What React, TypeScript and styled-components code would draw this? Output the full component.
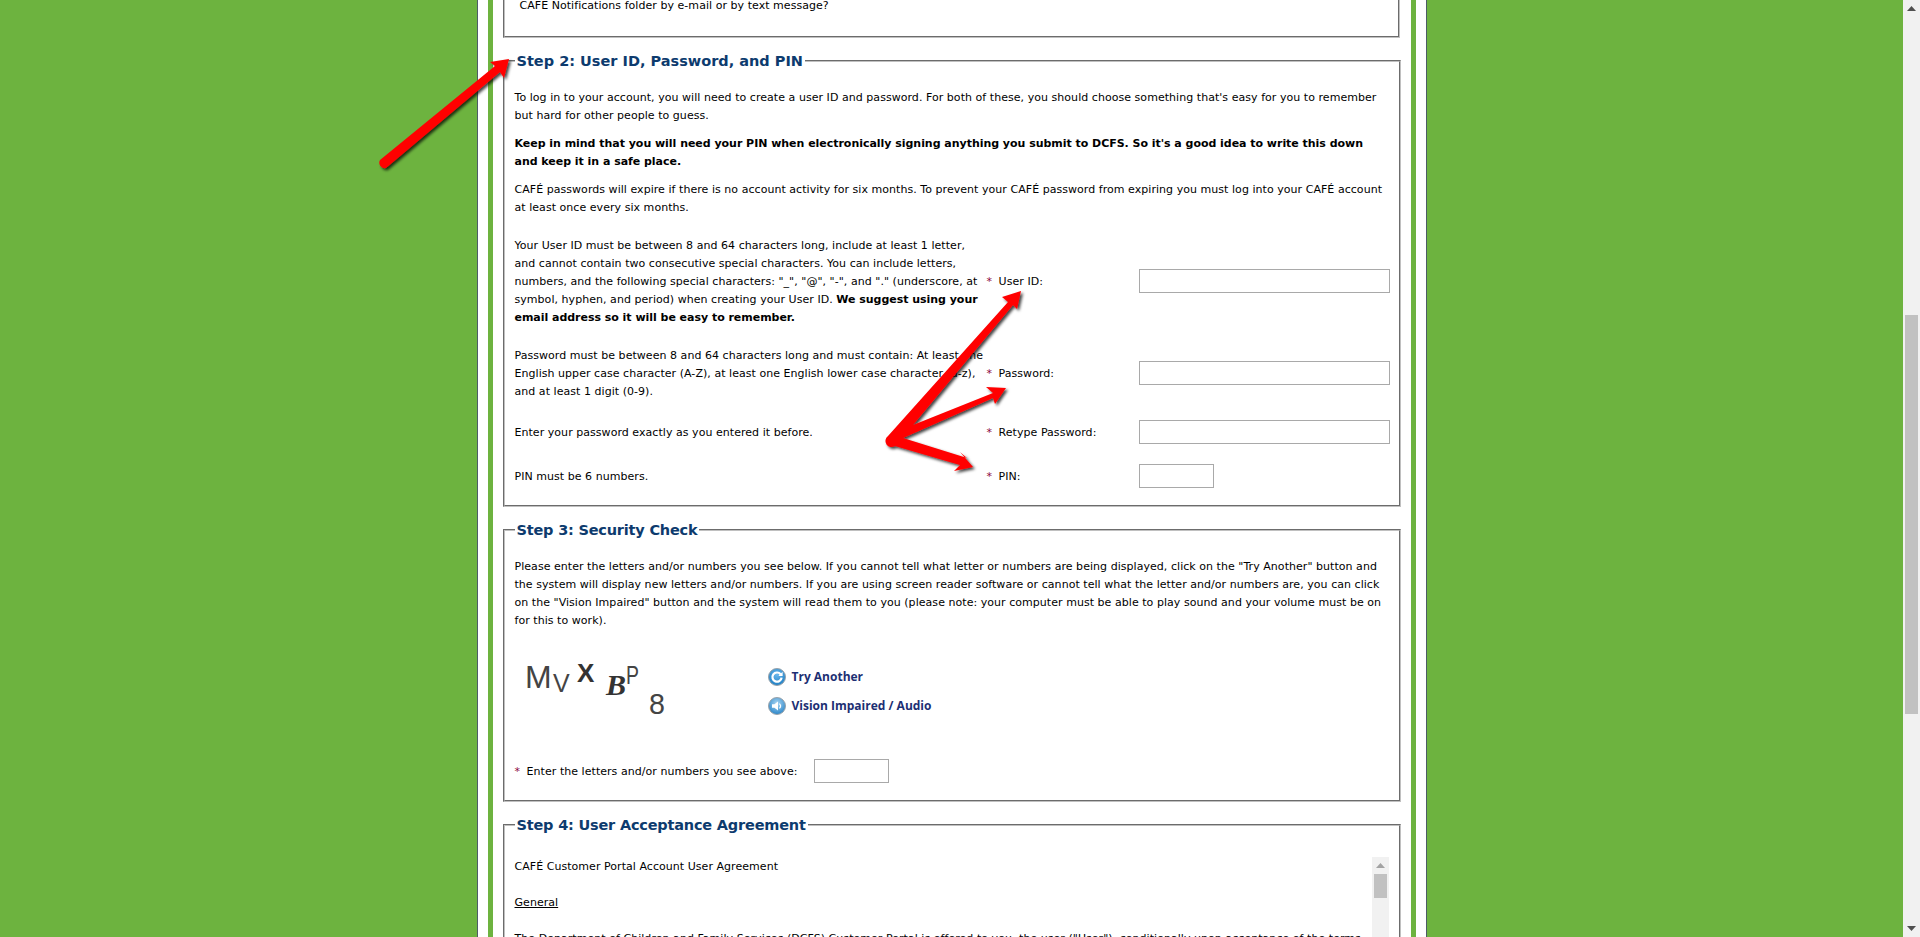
import React from "react";
import styled, { createGlobalStyle } from "styled-components";

const Global = createGlobalStyle`
  html, body { margin: 0; padding: 0; height: 100%; overflow: hidden; background: #6db33f; }
  #root { height: 100%; }
  b { letter-spacing: -0.03px; }
`;

const Shell = styled.div`
  display: flex;
  height: 937px;
  overflow: hidden;
  position: relative;
  font-family: "DejaVu Sans", Verdana, sans-serif;
  font-size: 11px;
  line-height: 18px;
  letter-spacing: 0.045px;
  color: #000;
`;

const Viewport = styled.div`
  flex: 1;
  display: flex;
  justify-content: center;
  overflow: hidden;
  min-width: 0;
`;

const Page = styled.main`
  width: 950px;
  box-sizing: border-box;
  flex: none;
  background: #fff;
  border: solid #4d5c66;
  border-width: 0 1px;
  padding: 0 10px;
`;

const Band = styled.div`
  height: 100%;
  border: solid #6db33f;
  border-width: 0 5px;
  padding: 0 10px;
  background: #fff;
`;

const TopBox = styled.div`
  height: 38px;
  box-sizing: border-box;
  border: 2px groove #c0c0c0;
  border-top: 0;
  padding: 0 0 0 15px;
  margin-right: 1px;
  line-height: 12px;
`;

const Section = styled.fieldset<{ $clip?: boolean }>`
  margin: 14px 0 0;
  padding: 18px 10px 17px;
  border: 2px groove #c0c0c0;
  min-width: 0;
  width: 898px;
  box-sizing: border-box;
  ${(p) => (p.$clip ? "height: 300px; padding-bottom: 0;" : "")}
`;

const Legend = styled.legend<{ $tight?: boolean }>`
  padding: 0 2px;
  margin-left: 0;
  font-size: 14.5px;
  line-height: 18px;
  font-weight: bold;
  letter-spacing: ${(p) => (p.$tight ? "-0.2px" : "0")};
  color: #0d3b6e;
`;

const Para = styled.p`
  margin: 0 0 10px;
  position: relative;
  top: 1px;
`;

const Rows = styled.div`
  display: grid;
  grid-template-columns: 472px 152px 1fr;
  row-gap: 20px;
  margin-top: 20px;
  align-items: center;
`;

const Description = styled.div`
  position: relative;
  top: 1px;
`;

const Label = styled.label`
  display: block;
  position: relative;
  top: 1px;
`;

const Star = styled.span`
  color: #8b0a3c;
  margin-right: 3px;
`;

const TextInput = styled.input<{ $w: number }>`
  display: block;
  width: ${(p) => p.$w}px;
  height: 24px;
  box-sizing: border-box;
  border: 1px solid #a9a9a9;
  padding: 0;
  background: #fff;
`;

const CaptchaRow = styled.div`
  display: flex;
  align-items: flex-start;
  margin: 20px 0;
  height: 90px;
`;

const CaptchaArt = styled.svg`
  display: block;
  flex: none;
  width: 240px;
  height: 80px;
  margin-right: 13px;
`;

const LinkList = styled.div`
  display: flex;
  flex-direction: column;
  gap: 11px;
  margin-top: 19px;
`;

const ActionLink = styled.a`
  display: flex;
  align-items: center;
  gap: 6px;
  height: 18px;
  font-family: "Open Sans", sans-serif;
  font-size: 12px;
  font-weight: 700;
  letter-spacing: 0;
  color: #1d2f73;
  text-decoration: none;
`;

const EnterRow = styled.div`
  display: flex;
  align-items: center;
  gap: 17px;
`;

const AgreementBox = styled.div`
  display: flex;
  padding-top: 5px;
`;

const AgreementText = styled.div`
  width: 857px;
  flex: none;
  padding-top: 1px;
`;

const AgreementPara = styled.p`
  margin: 0 0 18px;
  white-space: nowrap;
`;

const Underlined = styled.span`
  text-decoration: underline;
`;

const InnerScroll = styled.div`
  width: 17px;
  flex: none;
  background: #f1f1f1;
  height: 200px;
  display: flex;
  flex-direction: column;
  align-items: center;
`;

const Track = styled.aside`
  width: 17px;
  flex: none;
  height: 937px;
  background: #f1f1f1;
  display: flex;
  flex-direction: column;
  align-items: center;
`;

const Thumb = styled.div<{ $h: number; $top: number }>`
  width: 13px;
  height: ${(p) => p.$h}px;
  margin-top: ${(p) => p.$top}px;
  background: #c1c1c1;
  flex: none;
`;

const ArrowUp = styled.svg`
  display: block;
  width: 9px;
  height: 5px;
  margin-top: 6px;
  flex: none;
`;

const ArrowDown = styled(ArrowUp)`
  margin-top: auto;
  margin-bottom: 6px;
`;

const Overlay = styled.svg`
  position: absolute;
  inset: 0;
  width: 1920px;
  height: 937px;
  pointer-events: none;
`;

const RefreshIcon = () => (
  <svg width="18" height="18" viewBox="0 0 18 18">
    <defs>
      <radialGradient id="ba" cx="50%" cy="35%" r="65%">
        <stop offset="0" stopColor="#6bb8ec" />
        <stop offset="1" stopColor="#1f7fc4" />
      </radialGradient>
    </defs>
    <circle cx="9" cy="9" r="8.5" fill="url(#ba)" stroke="#9aa3aa" />
    <path d="M12.6 6.2A4.6 4.6 0 1 0 13.6 9.6" fill="none" stroke="#fff" strokeWidth="2.2" />
    <path d="M14.6 3.8V8H10.4Z" fill="#fff" />
  </svg>
);

const AudioIcon = () => (
  <svg width="18" height="18" viewBox="0 0 18 18">
    <defs>
      <radialGradient id="bb" cx="50%" cy="35%" r="65%">
        <stop offset="0" stopColor="#a9d5f2" />
        <stop offset="1" stopColor="#2b86c9" />
      </radialGradient>
    </defs>
    <circle cx="9" cy="9" r="8.5" fill="url(#bb)" stroke="#9aa3aa" />
    <path d="M4 7.2H6.4L10 4.4V13.6L6.4 10.8H4Z" fill="#fff" />
    <path d="M11.4 6.6A3.4 3.4 0 0 1 11.4 11.4" fill="none" stroke="#fff" strokeWidth="1.2" />
  </svg>
);

const UpGlyph = ({ c }: { c: string }) => (
  <ArrowUp viewBox="0 0 9 5"><path d="M4.5 0 9 5H0Z" fill={c} /></ArrowUp>
);

const Arrows = () => (
  <Overlay viewBox="0 0 1920 937">
    <defs>
      <filter id="sh" x="-20%" y="-20%" width="150%" height="150%">
        <feDropShadow dx="2" dy="2" stdDeviation="1.6" floodColor="#000" floodOpacity="0.75" />
      </filter>
    </defs>
    <g fill="#ff0000" filter="url(#sh)">
      <path d="M380 160 495 66 490 62 509 59 504 78 500 72 386 168A5.500 5.500 0 0 1 380 160Z" />
      <path d="M888 436 1008 302 1002 297 1021 291 1017 309 1013 305 913 425 993 393 986 387 1006 388 995 404 993 398 903 438 967 458 960 452 973 467 954 471 960 465 895 446A6 6 0 0 1 888 436Z" />
    </g>
  </Overlay>
);

export default function App() {
  return (
    <Shell>
      <Global />
      <Viewport>
        <Page>
          <Band>
            <TopBox>CAFE Notifications folder by e-mail or by text message?</TopBox>

            <Section>
              <Legend>Step 2: User ID, Password, and PIN</Legend>
              <Para>
                To log in to your account, you will need to create a user ID and password. For both of these, you should choose something that's easy for you to remember but hard for other people to guess.
              </Para>
              <Para>
                <b>Keep in mind that you will need your PIN when electronically signing anything you submit to DCFS. So it's a good idea to write this down and keep it in a safe place.</b>
              </Para>
              <Para>
                CAFÉ passwords will expire if there is no account activity for six months. To prevent your CAFÉ password from expiring you must log into your CAFÉ account at least once every six months.
              </Para>
              <Rows>
                <Description>
                  Your User ID must be between 8 and 64 characters long, include at least 1 letter,
                  and cannot contain two consecutive special characters. You can include letters,
                  numbers, and the following special characters: "_", "@", "-", and "." (underscore, at
                  symbol, hyphen, and period) when creating your User ID. <b>We suggest using your email address so it will be easy to remember.</b>
                </Description>
                <Label><Star>*</Star> User ID:</Label>
                <TextInput $w={251} />

                <Description>
                  Password must be between 8 and 64 characters long and must contain: At least one
                  English upper case character (A-Z), at least one English lower case character (a-z),
                  and at least 1 digit (0-9).
                </Description>
                <Label><Star>*</Star> Password:</Label>
                <TextInput $w={251} />

                <Description>Enter your password exactly as you entered it before.</Description>
                <Label><Star>*</Star> Retype Password:</Label>
                <TextInput $w={251} />

                <Description>PIN must be 6 numbers.</Description>
                <Label><Star>*</Star> PIN:</Label>
                <TextInput $w={75} />
              </Rows>
            </Section>

            <Section>
              <Legend $tight>Step 3: Security Check</Legend>
              <Para>
                Please enter the letters and/or numbers you see below. If you cannot tell what letter or numbers are being displayed, click on the "Try Another" button and the system will display new letters and/or numbers. If you are using screen reader software or cannot tell what the letter and/or numbers are, you can click on the "Vision Impaired" button and the system will read them to you (please note: your computer must be able to play sound and your volume must be on for this to work).
              </Para>
              <CaptchaRow>
                <CaptchaArt viewBox="0 0 240 80">
                  <g fontFamily="Liberation Sans, sans-serif" fill="#444">
                    <text x="10" y="39" fontSize="32">M</text>
                    <text x="38" y="43" fontSize="25">V</text>
                    <text x="62" y="33" fontSize="26" fontWeight="bold" fill="#333">X</text>
                    <text x="91" y="46" fontSize="30" fontFamily="Liberation Serif, serif" fontWeight="bold" fontStyle="italic" fill="#333">B</text>
                    <text x="111" y="35" fontSize="26" textLength="13" lengthAdjust="spacingAndGlyphs">P</text>
                    <text x="134" y="65" fontSize="30" textLength="16" lengthAdjust="spacingAndGlyphs">8</text>
                  </g>
                </CaptchaArt>
                <LinkList>
                  <ActionLink><RefreshIcon />Try Another</ActionLink>
                  <ActionLink><AudioIcon />Vision Impaired / Audio</ActionLink>
                </LinkList>
              </CaptchaRow>
              <EnterRow>
                <Label><Star>*</Star> Enter the letters and/or numbers you see above:</Label>
                <TextInput $w={75} />
              </EnterRow>
            </Section>

            <Section $clip>
              <Legend $tight>Step 4: User Acceptance Agreement</Legend>
              <AgreementBox>
                <AgreementText>
                  <AgreementPara>CAFÉ Customer Portal Account User Agreement</AgreementPara>
                  <AgreementPara><Underlined>General</Underlined></AgreementPara>
                  <AgreementPara>The Department of Children and Family Services (DCFS) Customer Portal is offered to you, the user ("User"), conditionally upon acceptance of the terms</AgreementPara>
                </AgreementText>
                <InnerScroll>
                  <UpGlyph c="#a3a3a3" />
                  <Thumb $h={24} $top={6} />
                </InnerScroll>
              </AgreementBox>
            </Section>
          </Band>
        </Page>
      </Viewport>
      <Track>
        <UpGlyph c="#505050" />
        <Thumb $h={399} $top={304} />
        <ArrowDown viewBox="0 0 9 5"><path d="M0 0H9L4.500 5Z" fill="#505050" /></ArrowDown>
      </Track>
      <Arrows />
    </Shell>
  );
}
